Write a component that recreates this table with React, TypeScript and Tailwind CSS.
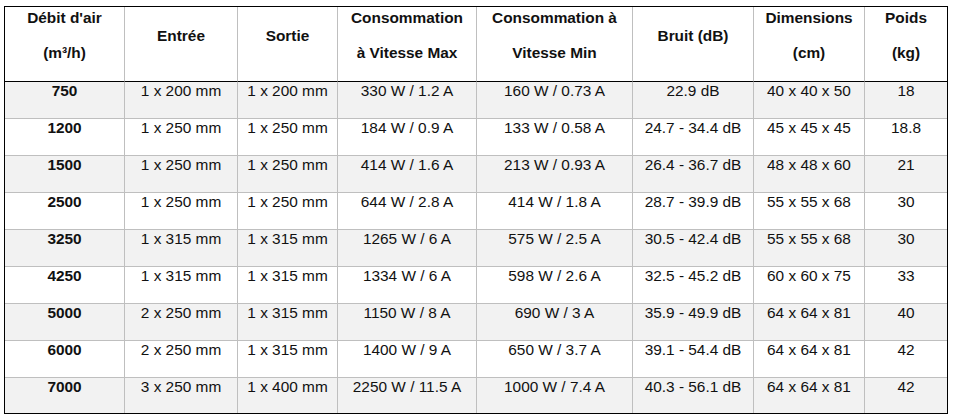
const headers: string[][] = [
  ["Débit d'air", "(m³/h)"],
  ["Entrée"],
  ["Sortie"],
  ["Consommation", "à Vitesse Max"],
  ["Consommation à", "Vitesse Min"],
  ["Bruit (dB)"],
  ["Dimensions", "(cm)"],
  ["Poids", "(kg)"],
];

const rows: string[][] = [
  ["750", "1 x 200 mm", "1 x 200 mm", "330 W / 1.2 A", "160 W / 0.73 A", "22.9 dB", "40 x 40 x 50", "18"],
  ["1200", "1 x 250 mm", "1 x 250 mm", "184 W / 0.9 A", "133 W / 0.58 A", "24.7 - 34.4 dB", "45 x 45 x 45", "18.8"],
  ["1500", "1 x 250 mm", "1 x 250 mm", "414 W / 1.6 A", "213 W / 0.93 A", "26.4 - 36.7 dB", "48 x 48 x 60", "21"],
  ["2500", "1 x 250 mm", "1 x 250 mm", "644 W / 2.8 A", "414 W / 1.8 A", "28.7 - 39.9 dB", "55 x 55 x 68", "30"],
  ["3250", "1 x 315 mm", "1 x 315 mm", "1265 W / 6 A", "575 W / 2.5 A", "30.5 - 42.4 dB", "55 x 55 x 68", "30"],
  ["4250", "1 x 315 mm", "1 x 315 mm", "1334 W / 6 A", "598 W / 2.6 A", "32.5 - 45.2 dB", "60 x 60 x 75", "33"],
  ["5000", "2 x 250 mm", "1 x 315 mm", "1150 W / 8 A", "690 W / 3 A", "35.9 - 49.9 dB", "64 x 64 x 81", "40"],
  ["6000", "2 x 250 mm", "1 x 315 mm", "1400 W / 9 A", "650 W / 3.7 A", "39.1 - 54.4 dB", "64 x 64 x 81", "42"],
  ["7000", "3 x 250 mm", "1 x 400 mm", "2250 W / 11.5 A", "1000 W / 7.4 A", "40.3 - 56.1 dB", "64 x 64 x 81", "42"],
];

export default function App() {
  return (
    <div
      className="min-h-[420px] w-[956px] bg-white pl-[4px] pt-[6px] text-[15.4px] text-[#111]"
      style={{ fontFamily: '"Liberation Sans", Arial, sans-serif' }}
    >
      <div className="grid w-[944px] grid-cols-[119px_113px_100px_139px_156px_121px_111px_83px] border border-black">
        {headers.map((lines, i) => (
          <div
            key={`h${i}`}
            className={`flex h-[75px] flex-col items-center justify-center gap-[15px] border-b border-b-black pb-[17px] text-center font-bold leading-[20px] ${
              i > 0 ? "border-l border-l-[#bfbfbf]" : ""
            }`}
          >
            {lines.map((l) => (
              <span key={l}>{l}</span>
            ))}
          </div>
        ))}

        {rows.map((row, r) =>
          row.map((cell, c) => (
            <div
              key={`${r}-${c}`}
              className={`${r === rows.length - 1 ? "h-[35px]" : "h-[37px]"} text-center leading-[18px] ${
                r % 2 === 0 ? "bg-[#f2f2f2]" : "bg-white"
              } ${c > 0 ? "border-l border-l-[#bfbfbf]" : ""} ${
                r < rows.length - 1 ? "border-b border-b-[#bfbfbf]" : ""
              } ${c === 0 ? "font-bold" : ""}`}
            >
              {cell}
            </div>
          )),
        )}
      </div>
    </div>
  );
}
